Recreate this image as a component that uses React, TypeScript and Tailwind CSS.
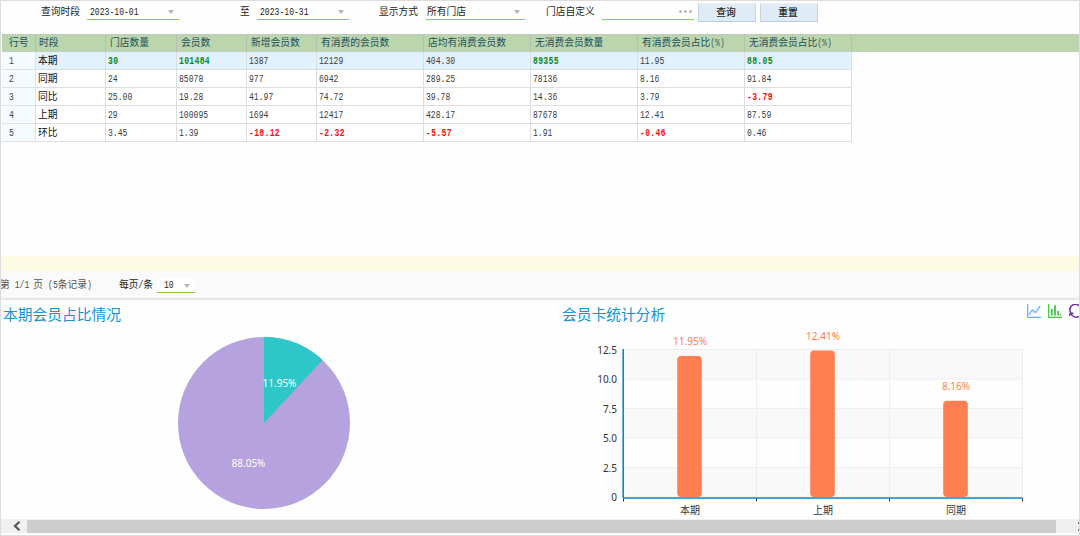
import type { ReactNode } from 'react'
import clsx from 'clsx'

interface Cell {
  value: string
  tone?: 'up' | 'down'
}

interface Row {
  name: string
  cells: Cell[]
}

const COLUMNS = [
  '行号',
  '时段',
  '门店数量',
  '会员数',
  '新增会员数',
  '有消费的会员数',
  '店均有消费会员数',
  '无消费会员数量',
  '有消费会员占比(%)',
  '无消费会员占比(%)',
]

const up = (value: string): Cell => ({ value, tone: 'up' })
const down = (value: string): Cell => ({ value, tone: 'down' })
const v = (value: string): Cell => ({ value })

const ROWS: Row[] = [
  { name: '本期', cells: [up('30'), up('101484'), v('1387'), v('12129'), v('404.30'), up('89355'), v('11.95'), up('88.05')] },
  { name: '同期', cells: [v('24'), v('85078'), v('977'), v('6942'), v('289.25'), v('78136'), v('8.16'), v('91.84')] },
  { name: '同比', cells: [v('25.00'), v('19.28'), v('41.97'), v('74.72'), v('39.78'), v('14.36'), v('3.79'), down('-3.79')] },
  { name: '上期', cells: [v('29'), v('100095'), v('1694'), v('12417'), v('428.17'), v('87678'), v('12.41'), v('87.59')] },
  { name: '环比', cells: [v('3.45'), v('1.39'), down('-18.12'), down('-2.32'), down('-5.57'), v('1.91'), down('-0.46'), v('0.46')] },
]

const BARS = [
  { name: '本期', value: 11.95 },
  { name: '上期', value: 12.41 },
  { name: '同期', value: 8.16 },
]

const TICKS = ['12.5', '10.0', '7.5', '5.0', '2.5', '0']

const GRID = 'grid grid-cols-[34px_70px_71px_70px_70px_107px_107px_107px_107px_107px]'

function Num({ children, className }: { children: ReactNode; className?: string }) {
  return (
    <span className={clsx("inline-block origin-center scale-y-[1.3] font-['Liberation_Mono',monospace] text-[8.1px]", className)}>
      {children}
    </span>
  )
}

function Caret() {
  return (
    <svg width="6" height="4" viewBox="0 0 6 4" className="mt-px shrink-0">
      <path d="M0 0h6L3 4z" fill="#b5b5b5" />
    </svg>
  )
}

function Field({ children, className }: { children: ReactNode; className?: string }) {
  return (
    <div className={clsx('flex items-center justify-between border-b border-b-[#86cc45]', className)}>{children}</div>
  )
}

function Button({ children, className }: { children: ReactNode; className?: string }) {
  return (
    <button className={clsx('h-[19px] rounded-[1px] border border-t-[#e9eff6] border-r-[#c6d3e0] border-b-[#bccbd9] border-l-[#c6d3e0] bg-[#dfebf7] pr-[2px] leading-[17px] font-medium text-[#222]', className)}>
      {children}
    </button>
  )
}

function Toolbar() {
  return (
    <div className="flex h-[33px] shrink-0 items-start pt-[2px] pl-10 leading-[17px] text-[#1c1c1c]">
      <span className="w-[46px]">查询时段</span>
      <Field className="h-[17px] w-[92px] pr-[5px] pl-[3px]">
        <Num>2023-10-01</Num>
        <Caret />
      </Field>
      <span className="ml-[61px] w-[17px]">至</span>
      <Field className="h-[17px] w-[92px] pr-[5px] pl-[3px]">
        <Num>2023-10-31</Num>
        <Caret />
      </Field>
      <span className="ml-[30px] w-[47px]">显示方式</span>
      <Field className="h-[17px] w-[99px] pr-[5px] pl-[1px]">
        <span>所有门店</span>
        <Caret />
      </Field>
      <span className="ml-[21px] w-[56px]">门店自定义</span>
      <Field className="h-[17px] w-[92px] pr-[2px]">
        <span className="flex w-full justify-end">
          <svg width="13" height="3" viewBox="0 0 13 3" fill="#aaa">
            <circle cx="1.5" cy="1.5" r="1.3" />
            <circle cx="6.5" cy="1.5" r="1.3" />
            <circle cx="11.5" cy="1.5" r="1.3" />
          </svg>
        </span>
      </Field>
      <Button className="ml-[4px] w-[58px]">查询</Button>
      <Button className="ml-[4px] w-[58px]">重置</Button>
    </div>
  )
}

function DataTable() {
  return (
    <div className="h-[222px] shrink-0 pl-px">
      <div className={clsx(GRID, 'h-[18px] border-y border-t-[#c3c9c0] border-b-[#c5cfc0] bg-[#bbd5ac] text-[#1d5060]')}>
        {COLUMNS.map((label, i) => (
          <div
            key={label}
            className={clsx('border-r border-[#b4c0ad] leading-[16px] whitespace-nowrap', i === 0 ? 'pl-[7px]' : i === 1 ? 'pl-[3px]' : 'pl-[4px]')}
          >
            {label.replace('(%)', '')}
            {label.endsWith('(%)') && <Num className="align-top leading-[16px] text-[#44606a]">(%)</Num>}
          </div>
        ))}
      </div>
      {ROWS.map((row, i) => (
        <div key={row.name} className={clsx(GRID, 'h-[18px] w-[850px] grid-rows-[18px]', i === 0 ? 'bg-[#e1f2fd]' : 'bg-white')}>
          <div className="flex items-center border-r border-b border-[#dfe3e6] bg-[#f5fbff] pt-[2px] pl-[7px] text-[#444]">
            <Num>{i + 1}</Num>
          </div>
          <div className="border-r border-b border-[#dedede] pl-[2px] leading-[18px] text-[#111]">{row.name}</div>
          {row.cells.map((cell, j) => (
            <div key={j} className="flex items-center border-r border-b border-[#dedede] pt-[2px] pl-[2px]">
              <Num
                className={clsx(
                  cell.tone === 'up' && 'font-bold tracking-[0.3px] text-[#0a8a14]',
                  cell.tone === 'down' && 'font-bold tracking-[0.3px] text-[#fb0d12]',
                  !cell.tone && 'text-[#3c3c3c]',
                )}
              >
                {cell.value}
              </Num>
            </div>
          ))}
        </div>
      ))}
    </div>
  )
}

function Pager() {
  return (
    <div className="flex h-[29px] shrink-0 items-center border-b-2 border-[#e6e6e6] bg-[#fafafa] pt-[2px] text-[#555]">
      <span className="-ml-px whitespace-pre">第</span>
      <Num className="ml-[5px]">1/1</Num>
      <span className="ml-[4px]">页</span>
      <span className="ml-[5px] flex items-center">
        <Num>(</Num>
        <Num>5</Num>
        条记录
        <Num>)</Num>
      </span>
      <span className="ml-[27px] flex items-center text-[#1c1c1c]">
        每页<Num>/</Num>条
      </span>
      <Field className="ml-[4px] h-[15px] w-[38px] bg-white pr-[5px] pl-[7px] text-[#222]">
        <Num>10</Num>
        <Caret />
      </Field>
    </div>
  )
}

function PieChart() {
  return (
    <svg width="550" height="201" viewBox="0 318 550 201" className="block text-[10px]">
      <circle cx="263" cy="423" r="86" fill="#b6a2de" />
      <path d="M263 423V337A86 86 0 0 1 321.7 360.1Z" fill="#2ec7c9" />
      <g fill="#fff" textAnchor="middle">
        <text x="278.5" y="387">11.95%</text>
        <text x="247.5" y="467">88.05%</text>
      </g>
    </svg>
  )
}

function BarChart() {
  const left = 61
  const top = 349.5
  const step = 29.5
  const bottom = top + step * 5
  const band = 133
  return (
    <svg width="517" height="201" viewBox="0 318 517 201" className="block text-[10px]">
      {[0, 2, 4].map((i) => (
        <rect key={i} x={left} y={top + i * step} width={band * 3} height={step} fill="#f9f9f9" />
      ))}
      <g stroke="#eee">
        {TICKS.map((t, i) => (
          <path key={t} d={`M${left} ${top + i * step}H${left + band * 3}`} />
        ))}
        {[1, 2, 3].map((i) => (
          <path key={i} d={`M${left + band * i + 0.5} ${top}V${bottom}`} />
        ))}
      </g>
      {TICKS.map((t, i) => (
        <text key={t} x={left - 6} y={top + i * step + 4} textAnchor="end" fill="#333">
          {t}
        </text>
      ))}
      <path d={`M${left + 0.2} ${top - 0.5}V${bottom + 1}`} stroke="#008acd" strokeWidth="1.6" />
      <path d={`M${left} ${bottom + 1}H${left + band * 3 + 0.5}`} stroke="#008acd" strokeWidth="1.6" />
      {[0, 1, 2, 3].map((i) => (
        <path key={i} d={`M${left + band * i + 0.5} ${bottom + 1.5}v3`} stroke="#333" />
      ))}
      {BARS.map((bar, i) => {
        const height = (bar.value / 12.5) * (step * 5)
        const center = left + band * (i + 0.5)
        return (
          <g key={bar.name} textAnchor="middle">
            <rect x={center - 12.3} y={bottom - height} width="24.6" height={height} rx="4" fill="#ff7f50" />
            <text x={center + 0.5} y={bottom - height - 11} fill="#ff7f50">
              {bar.value}%
            </text>
            <text x={center + 0.5} y={bottom + 17} fill="#333">
              {bar.name}
            </text>
          </g>
        )
      })}
    </svg>
  )
}

function ChartTools() {
  return (
    <div className="flex gap-[7px] pt-[4px]">
      <svg width="14" height="14" viewBox="0 0 14 14" fill="none" stroke="#6ab2ff" strokeWidth="1.3">
        <path d="M0.7 0V13.3H14" />
        <path d="M2 10.8L5.2 6L8.4 8.6L13.2 2" />
      </svg>
      <svg width="14" height="14" viewBox="0 0 14 14" fill="none" stroke="#48c948" strokeWidth="1.3">
        <path d="M0.7 0V13.3H14" />
        <path d="M3.8 5V11.5M7 1.2V11.5M10.2 7V11.5" strokeWidth="1.9" />
        <path d="M12.6 10V11.5" />
      </svg>
      <svg width="10" height="14" viewBox="0 0 10 14" fill="none" stroke="#6b2fa0" strokeWidth="1.5">
        <path d="M1.6 8.2A5.4 5.4 0 0 1 10 1.7" />
        <path d="M10 12.5A5.8 5.8 0 0 1 2 9.8" />
        <path d="M0.6 12L1.3 8.9L4.5 9.6" />
      </svg>
    </div>
  )
}

function ScrollBar() {
  return (
    <div className="flex h-[14px] shrink-0 items-center bg-[#f0f0f0]">
      <div className="flex w-[26px] justify-center pl-[5px]">
        <svg width="8" height="10" viewBox="0 0 8 10" fill="none" stroke="#555" strokeWidth="2.2">
          <path d="M6.5 0.8L2 5L6.5 9.2" />
        </svg>
      </div>
      <div className="h-[13px] w-[1029px] bg-[#cdcdcd]" />
      <div className="flex flex-1 justify-end">
        <svg width="1" height="9" viewBox="0 0 1 9" fill="#777">
          <path d="M0 0h1v2H0zM0 7h1v2H0z" />
        </svg>
      </div>
    </div>
  )
}

export default function App() {
  return (
    <div className="flex h-[536px] w-[1080px] flex-col overflow-hidden border border-[#dcdcdc] bg-[#fefefe] font-['Noto_Sans','Noto_Sans_CJK_SC',sans-serif] text-[9.75px]">
      <Toolbar />
      <DataTable />
      <div className="h-[15px] shrink-0 bg-[#fdfae3]" />
      <Pager />
      <div className="flex h-[219px] shrink-0">
        <section className="w-[561px]">
          <h2 className="h-[18px] pt-[5px] pl-[2px] text-[14.75px] leading-[18px] text-[#1492d1]">本期会员占比情况</h2>
          <PieChart />
        </section>
        <section className="w-[517px]">
          <div className="flex h-[18px] justify-between">
            <h2 className="pt-[5px] text-[14.75px] leading-[18px] text-[#1492d1]">会员卡统计分析</h2>
            <ChartTools />
          </div>
          <BarChart />
        </section>
      </div>
      <ScrollBar />
    </div>
  )
}
